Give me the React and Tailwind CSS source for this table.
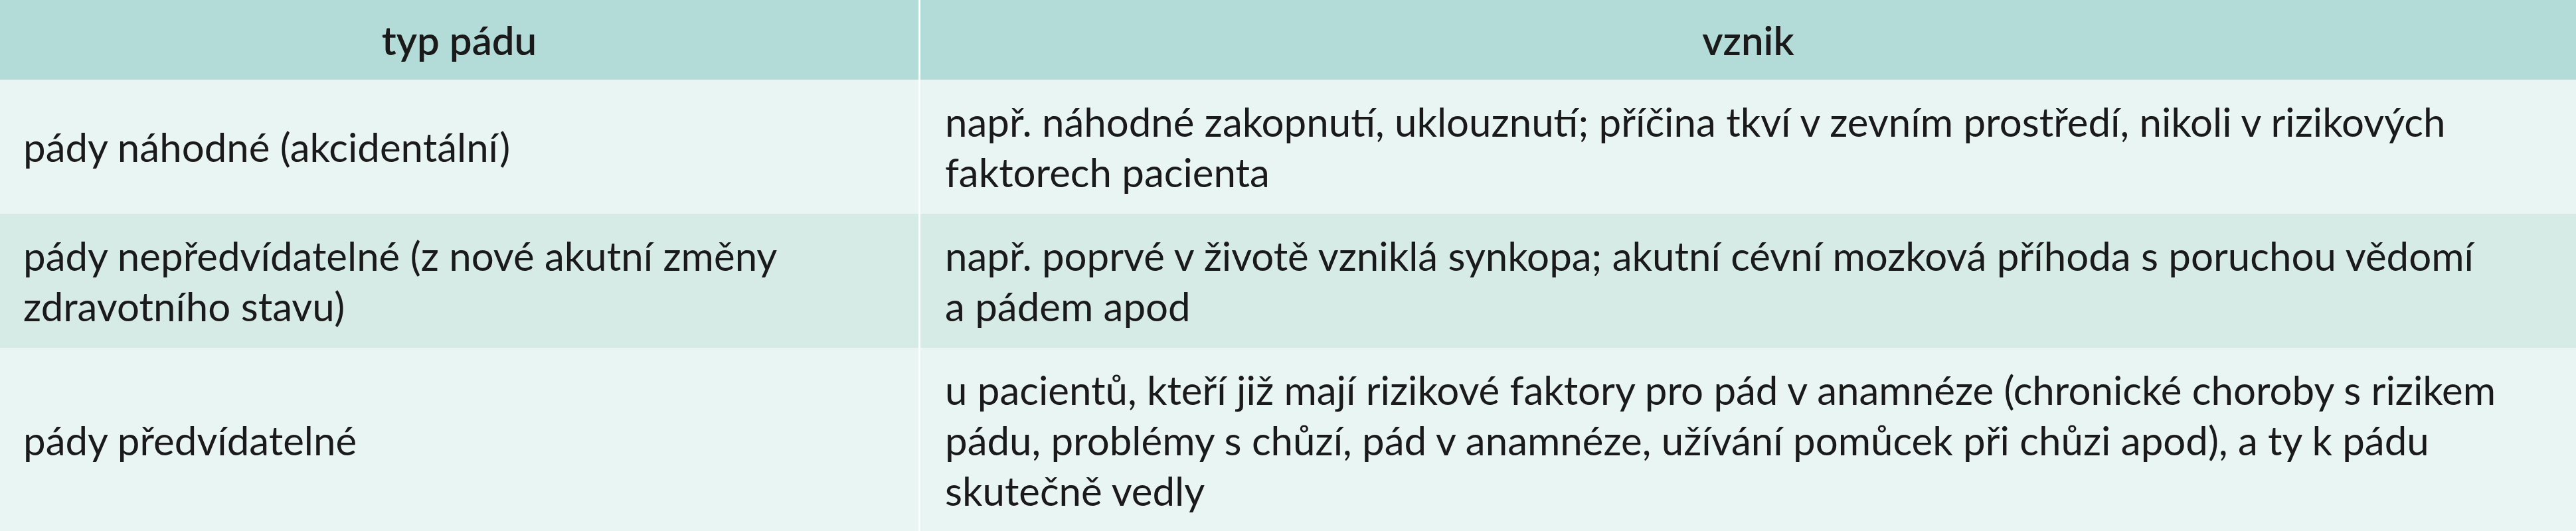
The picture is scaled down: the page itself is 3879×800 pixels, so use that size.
import React from 'react';

// czech typesetting: one-letter words never end a line
const tie = (text) => text.replace(/(^|\s)([aikosuvzAIKOSUVZ]) /g, '$1$2\u00a0');

const rows = [
  {
    type: 'pády náhodné (akcidentální)',
    origin:
      'např. náhodné zakopnutí, uklouznutí; příčina tkví v zevním prostředí, nikoli v rizikových faktorech pacienta',
    bg: 'bg-[#e9f5f2]',
  },
  {
    type: 'pády nepředvídatelné (z nové akutní změny zdravotního stavu)',
    origin:
      'např. poprvé v životě vzniklá synkopa; akutní cévní mozková příhoda s poruchou vědomí a pádem apod',
    bg: 'bg-[#d6eae6]',
  },
  {
    type: 'pády předvídatelné',
    origin:
      'u pacientů, kteří již mají rizikové faktory pro pád v anamnéze (chronické choroby s rizikem pádu, problémy s chůzí, pád v anamnéze, užívání pomůcek při chůzi apod), a ty k pádu skutečně vedly',
    bg: 'bg-[#e9f5f2]',
  },
];

const App = () => {
  return (
    <div className="w-[3879px] bg-white font-['Lato',sans-serif] text-[60px] leading-[76px] text-[#1a1a1a]">
      <div className="grid grid-cols-[1383px_1fr] gap-x-[3px]">
        <div className="flex items-center justify-center bg-[#b3dbd7] py-[22px] font-semibold">
          typ pádu
        </div>
        <div className="flex items-center justify-center bg-[#b3dbd7] py-[22px] font-semibold">
          vznik
        </div>

        {rows.map((row) => (
          <React.Fragment key={row.type}>
            <div className={`flex items-center px-[35px] py-[25px] ${row.bg}`}>
              <p>{tie(row.type)}</p>
            </div>
            <div className={`flex items-center px-[37px] py-[25px] ${row.bg}`}>
              <p>{tie(row.origin)}</p>
            </div>
          </React.Fragment>
        ))}
      </div>
    </div>
  );
};

export default App;
